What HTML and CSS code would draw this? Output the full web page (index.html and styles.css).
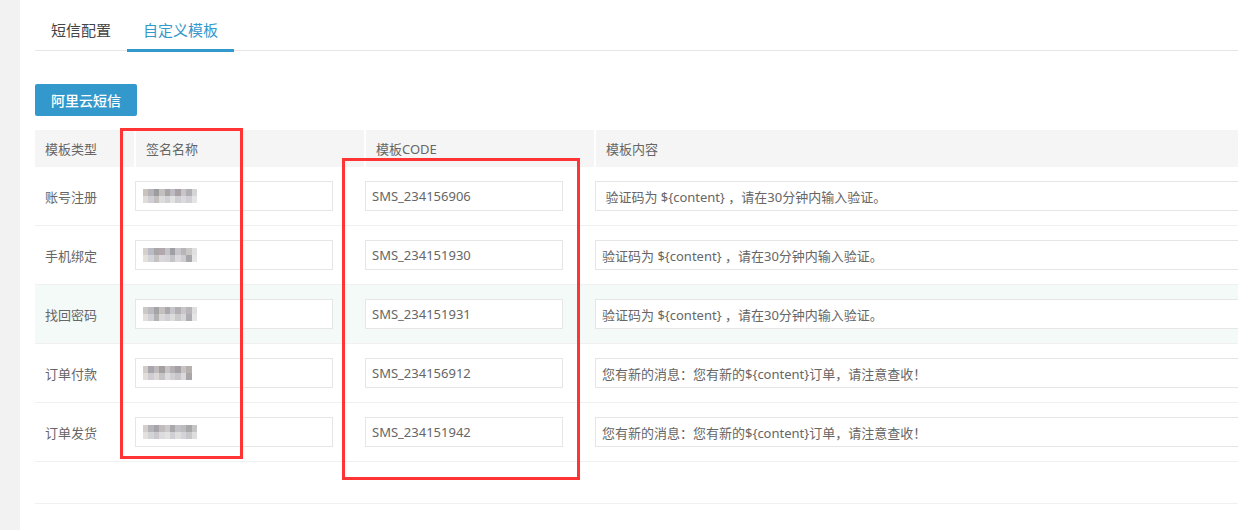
FILE: index.html
```html
<!DOCTYPE html>
<html lang="zh-CN">
<head>
<meta charset="utf-8">
<title>短信模板</title>
<link rel="stylesheet" href="styles.css">
</head>
<body>
<div class="page">
  <aside class="side"></aside>
  <main class="main">
    <ul class="tabs">
      <li class="tab">短信配置</li>
      <li class="tab active">自定义模板</li>
    </ul>
    <div class="toolbar">
      <button class="btn">阿里云短信</button>
    </div>
    <div class="table">
      <div class="row head">
        <div class="th">模板类型</div>
        <div class="th">签名名称</div>
        <div class="th">模板CODE</div>
        <div class="th">模板内容</div>
      </div>
      <div class="row">
        <div class="td label">账号注册</div>
        <div class="td"><div class="field"><span class="mosaic mz1"></span></div></div>
        <div class="td"><input class="field" value="SMS_234156906"></div>
        <div class="td"><input class="field wide" value=" 验证码为 ${content} ，请在30分钟内输入验证。"></div>
      </div>
      <div class="row">
        <div class="td label">手机绑定</div>
        <div class="td"><div class="field"><span class="mosaic mz2"></span></div></div>
        <div class="td"><input class="field" value="SMS_234151930"></div>
        <div class="td"><input class="field wide" value="验证码为 ${content} ，请在30分钟内输入验证。"></div>
      </div>
      <div class="row hover">
        <div class="td label">找回密码</div>
        <div class="td"><div class="field"><span class="mosaic mz3"></span></div></div>
        <div class="td"><input class="field" value="SMS_234151931"></div>
        <div class="td"><input class="field wide" value="验证码为 ${content} ，请在30分钟内输入验证。"></div>
      </div>
      <div class="row">
        <div class="td label">订单付款</div>
        <div class="td"><div class="field"><span class="mosaic mz4"></span></div></div>
        <div class="td"><input class="field" value="SMS_234156912"></div>
        <div class="td"><input class="field wide" value="您有新的消息：您有新的${content}订单，请注意查收！"></div>
      </div>
      <div class="row">
        <div class="td label">订单发货</div>
        <div class="td"><div class="field"><span class="mosaic mz5"></span></div></div>
        <div class="td"><input class="field" value="SMS_234151942"></div>
        <div class="td"><input class="field wide" value="您有新的消息：您有新的${content}订单，请注意查收！"></div>
      </div>
      <div class="row empty"></div>
    </div>
  </main>
</div>
<div class="mark mark-sign"></div>
<div class="mark mark-code"></div>
</body>
</html>
```
FILE: styles.css
```css
* { box-sizing: border-box; }
html, body { margin: 0; padding: 0; }
body {
  width: 1238px;
  height: 530px;
  overflow: hidden;
  background: #fff;
  font-family: "Noto Sans", "Noto Sans CJK SC", sans-serif;
  color: #666;
  position: relative;
}
.page { display: flex; height: 530px; overflow: hidden; }
.side { width: 20px; flex: none; background: #f2f2f2; }
.main { flex: none; width: 1218px; padding-left: 15px; overflow: hidden; }

.tabs {
  list-style: none;
  margin: 0;
  padding: 10px 0 0;
  display: flex;
  border-bottom: 1px solid #e6e6e6;
}
.tab {
  position: relative;
  padding: 0 16px;
  height: 40px;
  line-height: 40px;
  font-size: 15px;
  color: #444;
}
.tab.active { color: #3399cc; }
.tab.active::after {
  content: "";
  position: absolute;
  left: 0; right: 0; bottom: -2px;
  height: 3px;
  background: #3399cc;
}

.toolbar { padding-top: 33px; height: 79px; }
.btn {
  display: block;
  width: 102px;
  height: 32px;
  border: 0;
  border-radius: 2px;
  background: #3399cc;
  color: #fff;
  font-family: inherit;
  font-size: 14px;
  font-weight: 500;
  padding: 0;
  letter-spacing: 0;
}

.table { width: 1265px; }
.row {
  display: grid;
  grid-template-columns: 100px 230px 230px 1fr;
  height: 59px;
  border-bottom: 1px solid #f0f0f0;
  align-items: center;
}
.row.head {
  height: 37px;
  border-bottom: 0;
  align-items: stretch;
}
.row.hover { background: #f3faf7; }
.row.empty { height: 42px; }
.th {
  background: #f5f5f5;
  font-size: 13px;
  color: #666;
  padding-left: 10px;
  display: flex;
  align-items: center;
  border-left: 1px solid #fff;
  border-right: 1px solid #fff;
}
.th:first-child { border-left: 0; }
.td { font-size: 13px; }
.td.label { padding-left: 10px; color: #666; }

.field {
  display: flex;
  align-items: center;
  width: 198px;
  height: 30px;
  border: 1px solid #e6e6e6;
  background: #fff;
  padding: 0 6px;
  font-family: inherit;
  font-size: 13px;
  color: #666;
  outline: none;
  margin: 0;
}
.field.wide { width: 100%; }

.mosaic {
  display: block;
  width: 54px;
  height: 14px;
  margin-left: 1px;
}
.mz1 {
  background:
    linear-gradient(90deg, #c9c3c0 0 10%, #b4b4b8 10% 20%, #9c9c9e 20% 30%, #c3c0c2 30% 40%, #a9a4a6 40% 50%, #bcbcc2 50% 60%, #a8a2a6 60% 70%, #c8c4c8 70% 80%, #b2afb4 80% 90%, #d6d4d6 90% 100%) top / 100% 50% no-repeat,
    linear-gradient(90deg, #e0dcd9 0 10%, #cfcfd4 10% 20%, #c4c0c0 20% 30%, #dcdcdc 30% 40%, #d1d1d6 40% 50%, #e2e2e2 50% 60%, #cfcfd4 60% 70%, #dcd8dc 70% 80%, #d0d0d6 80% 90%, #e4e4e6 90% 100%) bottom / 100% 50% no-repeat;
}
.mz2 {
  background:
    linear-gradient(90deg, #d6d0cc 0 10%, #b9bcc4 10% 20%, #a8a6a8 20% 30%, #b0a8ac 30% 40%, #c4c4c8 40% 50%, #a0a0a4 50% 60%, #c8c6ca 60% 70%, #b8b4b8 70% 80%, #cbc8c8 80% 90%, #e0e0e0 90% 100%) top / 100% 50% no-repeat,
    linear-gradient(90deg, #e4e0dc 0 10%, #d2d4da 10% 20%, #c6c2c4 20% 30%, #dad6da 30% 40%, #d4d4d8 40% 50%, #c4c4c8 50% 60%, #dcdade 60% 70%, #d0ccd0 70% 80%, #a8a8ac 80% 90%, #e6e6e6 90% 100%) bottom / 100% 50% no-repeat;
}
.mz3 {
  background:
    linear-gradient(90deg, #ccc8c6 0 10%, #bcbcc0 10% 20%, #a4a4a6 20% 30%, #c4c0c0 30% 40%, #aaa8ac 40% 50%, #c6c6ca 50% 60%, #b2aeb2 60% 70%, #c8c6c8 70% 80%, #b8b6ba 80% 90%, #dedede 90% 100%) top / 100% 50% no-repeat,
    linear-gradient(90deg, #e2dedc 0 10%, #d0d0d6 10% 20%, #b4b2b4 20% 30%, #dad8da 30% 40%, #cfcfd4 40% 50%, #dcdcdc 50% 60%, #cacaca 60% 70%, #d8d6da 70% 80%, #aeaeb2 80% 90%, #e6e6e6 90% 100%) bottom / 100% 50% no-repeat;
}
.mz4 {
  background:
    linear-gradient(90deg, #d2ccc8 0 10%, #a8a6ac 10% 20%, #c0bcbe 20% 30%, #a4a0a2 30% 40%, #c8c4c6 40% 50%, #b4b0b6 50% 60%, #a4a0a4 60% 70%, #c6c2c6 70% 80%, #b8b0ae 80% 90%, #ffffff 90% 100%) top / 100% 50% no-repeat,
    linear-gradient(90deg, #e2ddd8 0 10%, #cfcdd2 10% 20%, #dcd8d8 20% 30%, #c6c4c6 30% 40%, #dedcdc 40% 50%, #d0cfd4 50% 60%, #c8c6c8 60% 70%, #dadadc 70% 80%, #aaa6a8 80% 90%, #ffffff 90% 100%) bottom / 100% 50% no-repeat;
}
.mz5 {
  background:
    linear-gradient(90deg, #d4cecc 0 10%, #b4b4ba 10% 20%, #a6a4a8 20% 30%, #c0bcbe 30% 40%, #cccacc 40% 50%, #aaa8ac 50% 60%, #c2c2c6 60% 70%, #bcbcbe 70% 80%, #a8a8aa 80% 90%, #c4c4c4 90% 100%) top / 100% 50% no-repeat,
    linear-gradient(90deg, #e4e0dc 0 10%, #d4d4d8 10% 20%, #cac8ca 20% 30%, #dcdcde 30% 40%, #e2e2e2 40% 50%, #d0d0d4 50% 60%, #dedede 60% 70%, #d4d4d8 70% 80%, #c8c8ca 80% 90%, #dedede 90% 100%) bottom / 100% 50% no-repeat;
}

.mark {
  position: absolute;
  border: 3px solid #ff3535;
  pointer-events: none;
}
.mark-sign { left: 120px; top: 128px; width: 123px; height: 331px; }
.mark-code { left: 342px; top: 158px; width: 238px; height: 322px; }
```
